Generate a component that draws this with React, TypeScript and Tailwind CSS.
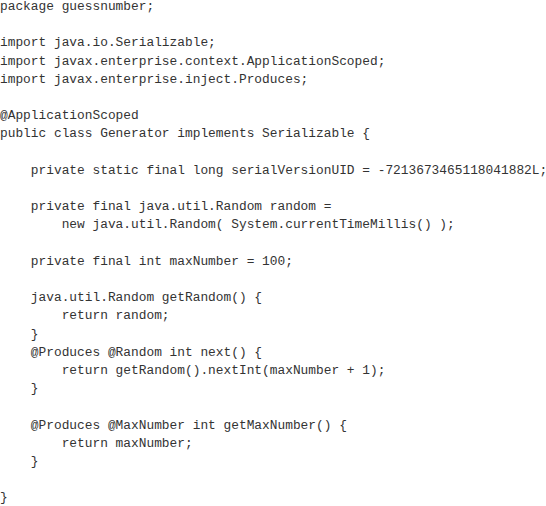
const code = `package guessnumber;

import java.io.Serializable;
import javax.enterprise.context.ApplicationScoped;
import javax.enterprise.inject.Produces;

@ApplicationScoped
public class Generator implements Serializable {

    private static final long serialVersionUID = -7213673465118041882L;

    private final java.util.Random random =
        new java.util.Random( System.currentTimeMillis() );

    private final int maxNumber = 100;

    java.util.Random getRandom() {
        return random;
    }
    @Produces @Random int next() {
        return getRandom().nextInt(maxNumber + 1);
    }

    @Produces @MaxNumber int getMaxNumber() {
        return maxNumber;
    }

}`;

export default function App() {
  return (
    <div className="w-[546px] h-[506px] overflow-hidden bg-white">
      <pre className="mt-[-2px] whitespace-pre text-[12.85px] leading-[18.2px] text-[#333333] font-['Liberation_Mono',monospace]">
        {code}
      </pre>
    </div>
  );
}
